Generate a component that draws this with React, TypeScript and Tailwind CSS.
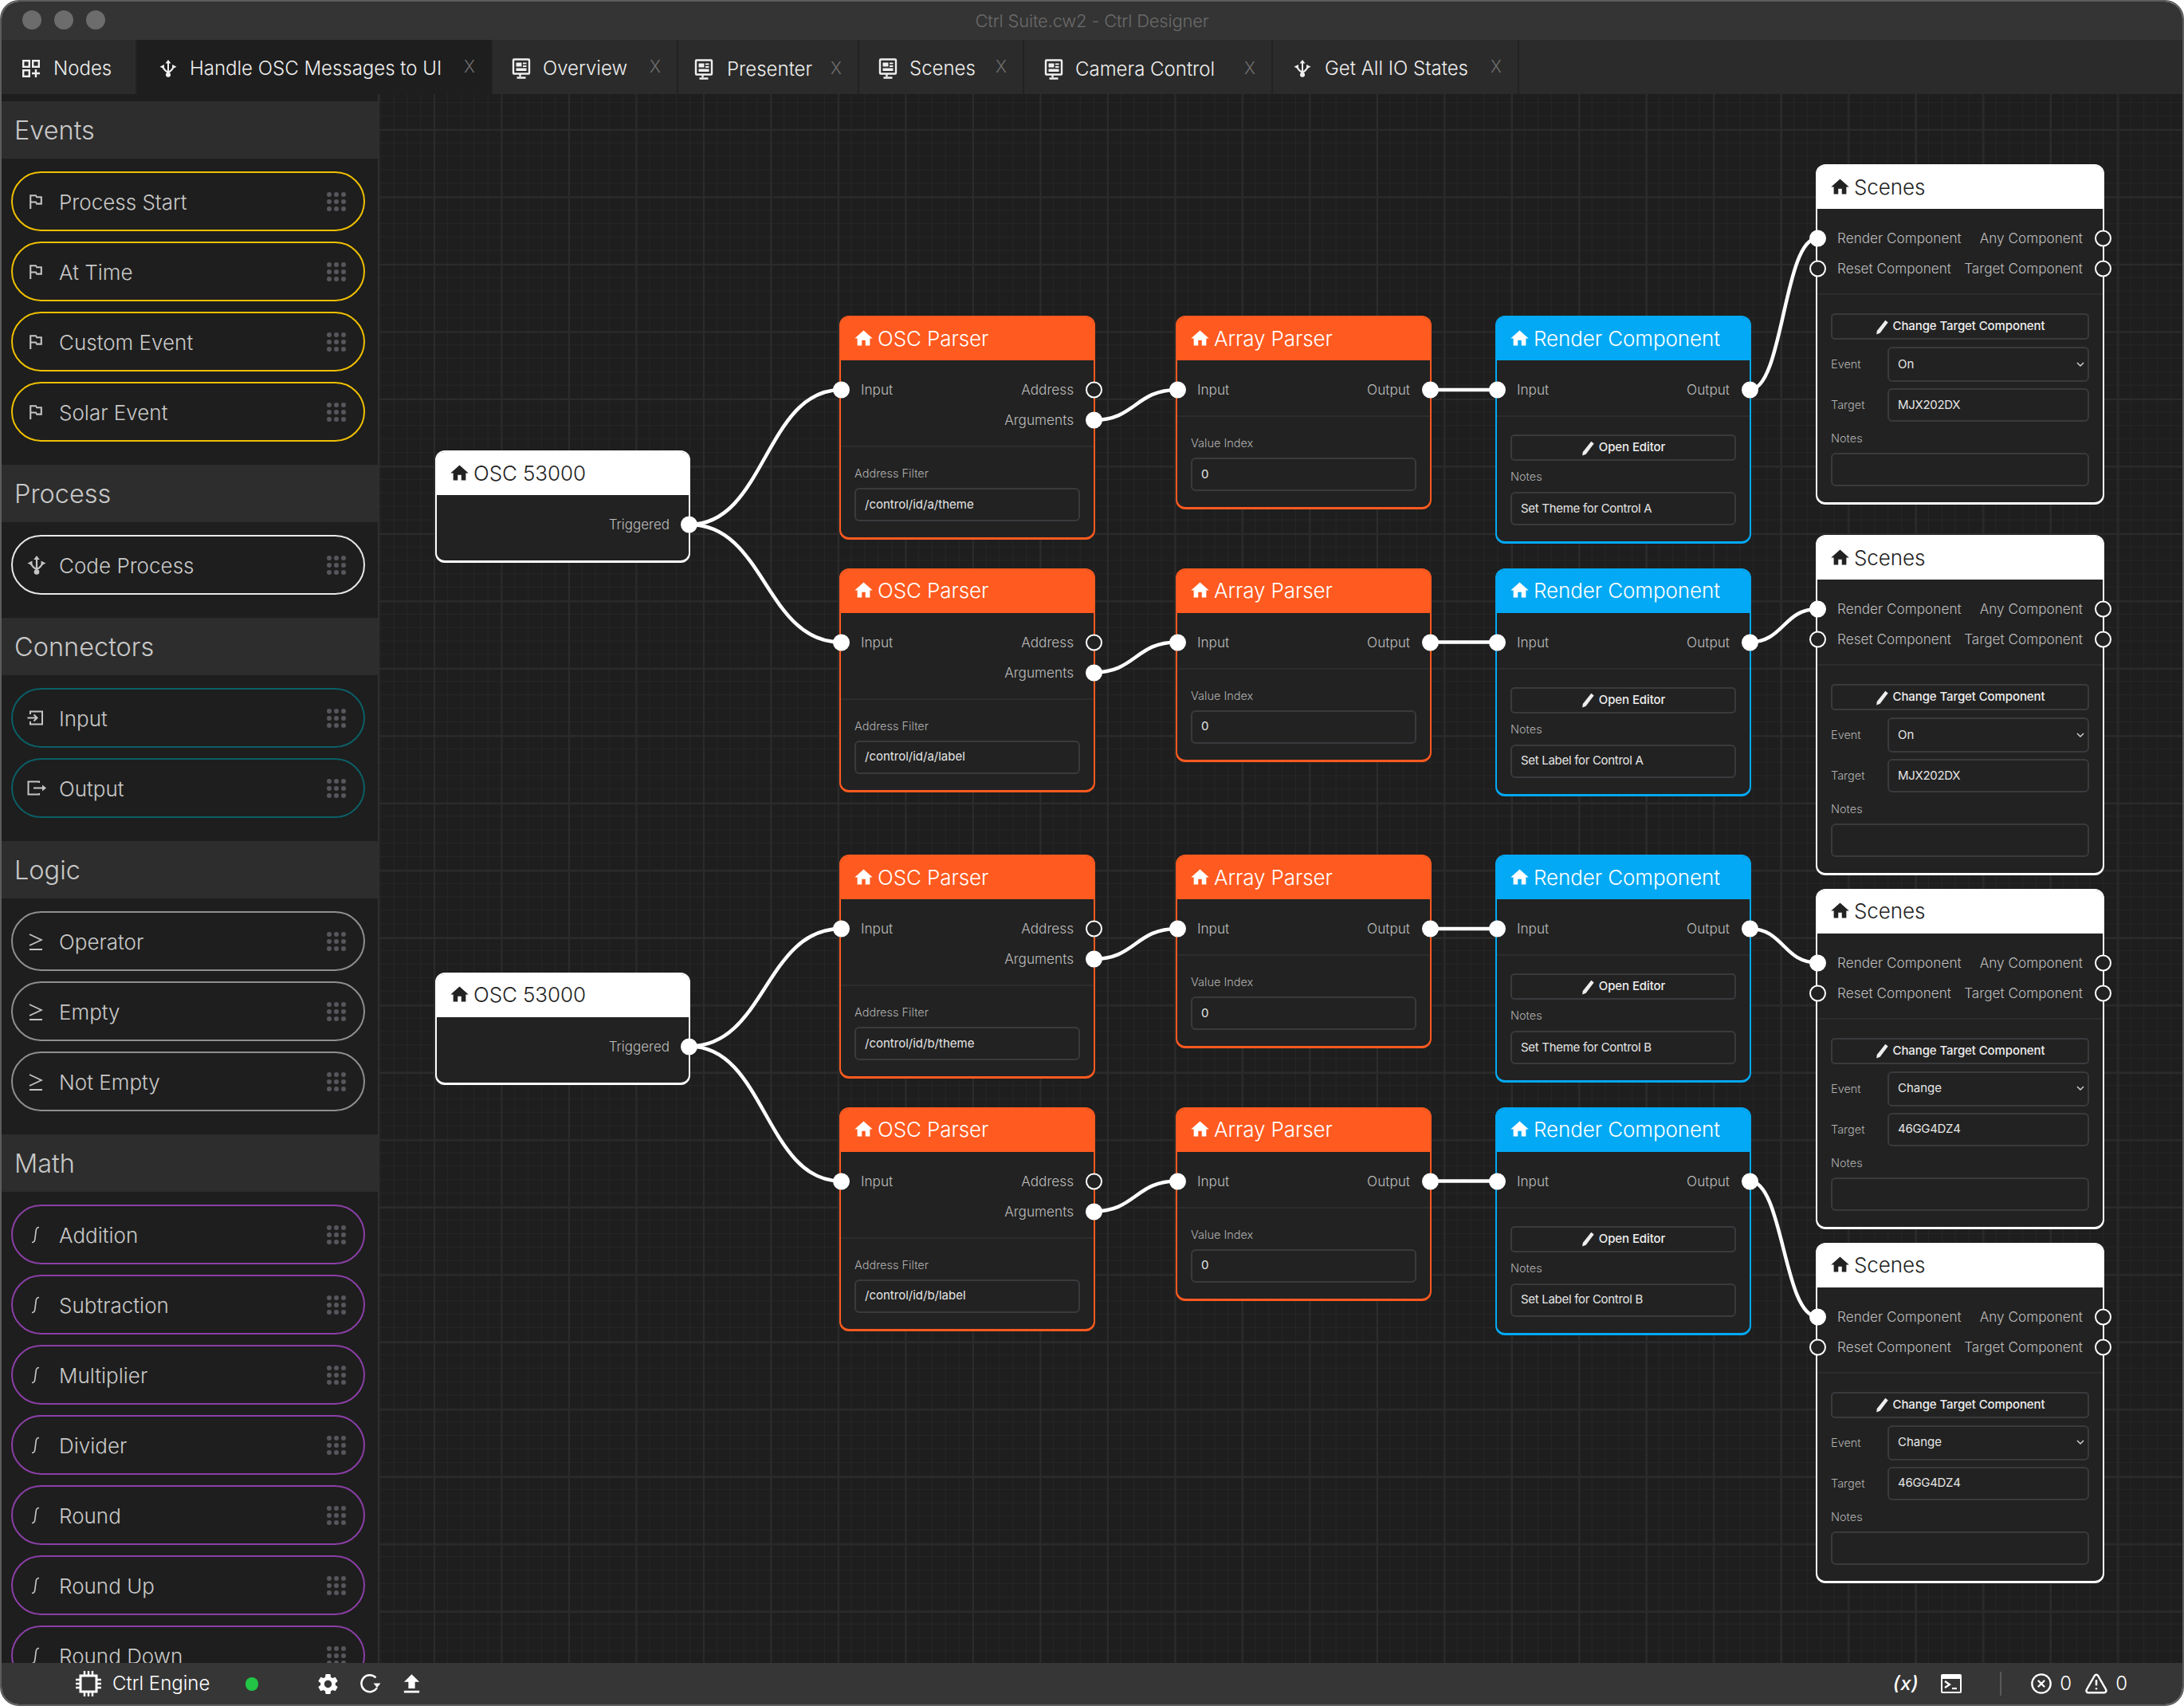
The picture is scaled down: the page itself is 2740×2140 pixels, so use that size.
import { ReactNode } from "react";
import { CircleX, TriangleAlert } from "lucide-react";
import { MdFileUpload, MdHome, MdOutlinedFlag, MdSettings } from "react-icons/md";

// canvas origin in page coordinates
const ORIGIN_X = 476;
const ORIGIN_Y = 118;

const UsbIcon = ({ size = 24 }: { size?: number }) => (
  <svg width={size} height={size} viewBox="0 0 24 24" fill="none" className="shrink-0">
    <path d="M12 3v17" stroke="currentColor" strokeWidth="2.2" />
    <path d="M12 16.5c-3 0-5-2.5-7-6M12 16.5c3 0 5-2.5 7-6" stroke="currentColor" strokeWidth="2.2" />
    <path d="M12 0l3.8 5H8.200zM0.500 9.500l6-3v6zM23.500 9.500l-6-3v6z" fill="currentColor" />
    <circle cx="12" cy="20.500" r="3.300" fill="currentColor" />
  </svg>
);

const PresenterIcon = () => (
  <svg width="24" height="26" viewBox="0 0 24 26" fill="none" className="shrink-0">
    <rect x="2" y="1.500" width="20" height="18" rx="1" stroke="currentColor" strokeWidth="2.400" />
    <path d="M5.500 5.500h7v5h-7zM14 5.500h4.500v2H14zM14 9h4.500v2H14zM5.500 12.500h13v3.500h-13z" fill="currentColor" />
    <path d="M10.500 20v3M6.500 24.500h11" stroke="currentColor" strokeWidth="2.400" />
  </svg>
);

const NodesIcon = () => (
  <svg width="22" height="22" viewBox="0 0 22 22" fill="none" className="shrink-0">
    <rect x="1.200" y="1.200" width="7.600" height="7.600" stroke="currentColor" strokeWidth="2.400" />
    <rect x="13.200" y="1.200" width="7.600" height="7.600" stroke="currentColor" strokeWidth="2.400" />
    <rect x="1.200" y="13.200" width="7.600" height="7.600" stroke="currentColor" strokeWidth="2.400" />
    <path d="M17 12v10M12 17h10" stroke="currentColor" strokeWidth="2.400" />
  </svg>
);

const InputIcon = () => (
  <svg width="22" height="22" viewBox="0 0 22 22" fill="none">
    <path d="M4 6V2.500h15v16H4V15" stroke="currentColor" strokeWidth="2" />
    <path d="M0.500 10.500H12M8.500 6.500l4 4-4 4" stroke="currentColor" strokeWidth="2" />
  </svg>
);

const OutputIcon = () => (
  <svg width="24" height="22" viewBox="0 0 24 22" fill="none">
    <path d="M15 4V2.500H1.500v16H15V17" stroke="currentColor" strokeWidth="2" />
    <path d="M8 10.500h13" stroke="currentColor" strokeWidth="2" />
    <path d="M24 10.500l-5-4v8z" fill="currentColor" />
  </svg>
);

const GteIcon = () => (
  <svg width="20" height="22" viewBox="0 0 20 22" fill="none">
    <path d="M3 2l15 7-15 7M3 21h16" stroke="currentColor" strokeWidth="1.800" />
  </svg>
);

const IntegralIcon = () => (
  <svg width="18" height="22" viewBox="0 0 18 22" fill="none">
    <path d="M15 1.500c-3 0-3.500 1.500-3.800 4l-1.400 11c-.3 2.600-1 4-3.800 4" stroke="currentColor" strokeWidth="1.700" />
  </svg>
);

const PencilIcon = () => (
  <svg width="18" height="20" viewBox="0 0 16 18" className="shrink-0" fill="currentColor">
    <path d="M11 1.500l3 2.500L5 16l-4 1.500L1.500 13.500z" />
  </svg>
);

const ChipIcon = () => (
  <svg width="32" height="32" viewBox="0 0 32 32" fill="none">
    <rect x="6" y="6" width="20" height="20" stroke="currentColor" strokeWidth="3" />
    <path d="M11 0v5M16 0v5M21 0v5M11 27v5M16 27v5M21 27v5M0 11h5M0 16h5M0 21h5M27 11h5M27 16h5M27 21h5" stroke="currentColor" strokeWidth="2.400" />
  </svg>
);

const RefreshIcon = () => (
  <svg width="28" height="28" viewBox="0 0 28 28" fill="none">
    <path d="M21.500 6.500A10.500 10.500 0 1 0 23 19" stroke="currentColor" strokeWidth="2.400" />
    <path d="M18.500 13.500h9l-4.500 5.500z" fill="currentColor" />
  </svg>
);

const TerminalIcon = () => (
  <svg width="26" height="24" viewBox="0 0 26 24">
    <rect x="0" y="0" width="26" height="24" rx="2" fill="currentColor" />
    <rect x="2" y="6" width="22" height="16" fill="#363636" />
    <path d="M5 9l6 4-6 4" fill="none" stroke="currentColor" strokeWidth="2.200" />
    <path d="M14 18h6" stroke="currentColor" strokeWidth="2.200" />
  </svg>
);

const GripDots = () => (
  <div className="ml-auto grid grid-cols-3 gap-[3px]">
    {Array.from({ length: 9 }).map((_, i) => (
      <span key={i} className="w-[6px] h-[6px] rounded-full bg-[#56565c]" />
    ))}
  </div>
);

interface Section {
  title: string;
  border: string;
  icon: ReactNode;
  items: string[];
}

const flag = <span className="-ml-[2px] flex"><MdOutlinedFlag size={25} /></span>;

const sections: Section[] = [
  { title: "Events", border: "border-[#f0c000]", icon: flag, items: ["Process Start", "At Time", "Custom Event", "Solar Event"] },
  { title: "Process", border: "border-[#e8e8e8]", icon: <UsbIcon />, items: ["Code Process"] },
  { title: "Connectors", border: "border-[#0b5f66]", icon: null, items: ["Input", "Output"] },
  { title: "Logic", border: "border-[#8f8f8f]", icon: <GteIcon />, items: ["Operator", "Empty", "Not Empty"] },
  { title: "Math", border: "border-[#8a3fa6]", icon: <IntegralIcon />, items: ["Addition", "Subtraction", "Multiplier", "Divider", "Round", "Round Up", "Round Down"] },
];

const Sidebar = () => (
  <aside className="w-[474px] shrink-0 bg-[#1e1e1e] border-r-2 border-[#2e2e2e] pt-[9px] overflow-hidden">
    {sections.map((s) => (
      <section key={s.title} className="pb-[29px]">
        <h2 className="h-[72px] flex items-center pl-[16px] pt-[2px] bg-[#2d2d2d] text-[32.500px] font-light text-[#c8c8c8]">
          {s.title}
        </h2>
        <div className="flex flex-col gap-[13px] pt-[16px] pl-[12px] pr-[16px]">
          {s.items.map((item) => (
            <div key={item} className={`h-[75px] shrink-0 flex items-center rounded-full border-2 pl-[18px] pr-[22px] ${s.border}`}>
              <span className="w-[40px] shrink-0 flex text-[#c4c4c4]">
                {s.icon ?? (item === "Input" ? <InputIcon /> : <OutputIcon />)}
              </span>
              <span className="pt-[2px] text-[26px] font-light text-[#c8c8c8]">{item}</span>
              <GripDots />
            </div>
          ))}
        </div>
      </section>
    ))}
  </aside>
);

const tabs = [
  { label: "Nodes", icon: <NodesIcon />, w: "w-[170px]", pl: "pl-[26px]", gap: "gap-[17px]", close: false, bg: "bg-[#2b2b2b] pt-[3px]" },
  { label: "Handle OSC Messages to UI", icon: <UsbIcon size={22} />, w: "w-[446px]", pl: "pl-[28px]", gap: "gap-[16px]", close: true, bg: "bg-[#1e1e1e] pt-[3px]" },
  { label: "Overview", icon: <PresenterIcon />, w: "w-[233px]", pl: "pl-[24px]", gap: "gap-[15px]", close: true, bg: "bg-[#2b2b2b] pt-[3px]" },
  { label: "Presenter", icon: <PresenterIcon />, w: "w-[227px]", pl: "pl-[20px]", gap: "gap-[17px]", close: true, bg: "bg-[#2b2b2b] pt-[6px]" },
  { label: "Scenes", icon: <PresenterIcon />, w: "w-[207px]", pl: "pl-[24px]", gap: "gap-[15px]", close: true, bg: "bg-[#2b2b2b] pt-[3px]" },
  { label: "Camera Control", icon: <PresenterIcon />, w: "w-[312px]", pl: "pl-[25px]", gap: "gap-[15px]", close: true, bg: "bg-[#2b2b2b] pt-[6px]" },
  { label: "Get All IO States", icon: <UsbIcon size={22} />, w: "w-[309px]", pl: "pl-[26px]", gap: "gap-[17px]", close: true, bg: "bg-[#2b2b2b] pt-[3px]" },
];

const TabBar = () => (
  <div className="h-[68px] flex shrink-0 bg-[#2b2b2b]">
    {tabs.map((t) => (
      <div key={t.label} className={`${t.w} ${t.pl} ${t.gap} ${t.bg} h-full shrink-0 flex items-center pr-[20px] border-r-2 border-[#222] text-[#efefef] text-[24px] font-light`}>
        {t.icon}
        <span className="whitespace-nowrap">{t.label}</span>
        {t.close && <span className="ml-auto -mt-[3px] text-[21px] font-light text-[#6f6f6f]">X</span>}
      </div>
    ))}
  </div>
);

const Port = ({ side, filled }: { side: "left" | "right"; filled: boolean }) => (
  <span
    className={`absolute top-1/2 -translate-y-1/2 w-[21px] h-[21px] rounded-full border-2 border-white ${
      side === "left" ? "left-[-10.5px]" : "right-[-10.5px]"
    } ${filled ? "bg-white" : "bg-[#222]"}`}
  />
);

type PortDef = { label: string; filled: boolean };
type Row = { l?: PortDef; r?: PortDef };

const Ports = ({ rows, pb }: { rows: Row[]; pb: string }) => (
  <div className={`pt-[18px] ${pb} border-b-2 border-[#2c2c2c]`}>
    {rows.map((row, i) => (
      <div key={i} className="relative flex items-center justify-between px-[25px] h-[38px] text-[17.200px] font-light text-[#bdbdbd]">
        {row.l ? <span>{row.l.label}</span> : <span />}
        {row.r ? <span>{row.r.label}</span> : <span />}
        {row.l && <Port side="left" filled={row.l.filled} />}
        {row.r && <Port side="right" filled={row.r.filled} />}
      </div>
    ))}
  </div>
);

const Field = ({ value, className = "" }: { value: string; className?: string }) => (
  <div className={`h-[42px] flex items-center px-[11px] rounded-[6px] border-2 border-[#3a3a3e] text-[15px] text-[#e6e6e6] ${className}`}>
    {value}
  </div>
);

const Label = ({ children, className = "" }: { children: ReactNode; className?: string }) => (
  <div className={`text-[14.500px] font-light leading-[20px] text-[#b0b0b0] ${className}`}>{children}</div>
);

const EditButton = ({ label }: { label: string }) => (
  <div className="h-[33px] flex items-center justify-center gap-[4px] rounded-[5px] border-2 border-[#3a3a3e] text-[15px] font-medium text-[#eeeeee] tracking-[-0.1px]">
    <PencilIcon />
    {label}
  </div>
);

const themes = {
  white: { box: "border-white", head: "bg-white text-[#222]" },
  orange: { box: "border-[#ff5a1f]", head: "bg-[#ff5a1f] text-white" },
  blue: { box: "border-[#03a9f4]", head: "bg-[#03a9f4] text-white" },
};

const Node = ({ x, y, w, h, title, theme, children }: { x: number; y: number; w: number; h: number; title: string; theme: keyof typeof themes; children: ReactNode }) => (
  <div
    className={`absolute rounded-[12px] border-2 border-b-[3px] bg-[#222] ${themes[theme].box}`}
    style={{ left: x - ORIGIN_X, top: y - ORIGIN_Y, width: w, height: h }}
  >
    <div className={`h-[54px] rounded-t-[9px] flex items-center gap-[4px] pl-[15px] pb-[2px] text-[26px] font-light tracking-[-0.1px] ${themes[theme].head}`}>
      <MdHome size={27} />
      {title}
    </div>
    {children}
  </div>
);

const OscNode = ({ y }: { y: number }) => (
  <Node x={546} y={y} w={320} h={141} title="OSC 53000" theme="white">
    <div className="relative h-[38px] mt-[18px] flex items-center justify-end pr-[24px] text-[17px] font-light text-[#bdbdbd]">
      <span className="pt-[2px]">Triggered</span>
      <Port side="right" filled />
    </div>
  </Node>
);

const ParserNode = ({ y, path }: { y: number; path: string }) => (
  <Node x={1053} y={y} w={321} h={281} title="OSC Parser" theme="orange">
    <Ports
      pb="pb-[13px]"
      rows={[
        { l: { label: "Input", filled: true }, r: { label: "Address", filled: false } },
        { r: { label: "Arguments", filled: true } },
      ]}
    />
    <div className="px-[17px] pt-[23px]">
      <Label className="mb-[8px]">Address Filter</Label>
      <Field value={path} />
    </div>
  </Node>
);

const ArrayNode = ({ y }: { y: number }) => (
  <Node x={1475} y={y} w={321} h={243} title="Array Parser" theme="orange">
    <Ports pb="pb-[13px]" rows={[{ l: { label: "Input", filled: true }, r: { label: "Output", filled: true } }]} />
    <div className="px-[17px] pt-[23px]">
      <Label className="mb-[8px]">Value Index</Label>
      <Field value="0" />
    </div>
  </Node>
);

const RenderNode = ({ y, note }: { y: number; note: string }) => (
  <Node x={1876} y={y} w={321} h={286} title="Render Component" theme="blue">
    <Ports pb="pb-[13px]" rows={[{ l: { label: "Input", filled: true }, r: { label: "Output", filled: true } }]} />
    <div className="px-[17px] pt-[22px]">
      <EditButton label="Open Editor" />
      <Label className="mt-[10px] mb-[9px]">Notes</Label>
      <Field value={note} className="tracking-[-0.3px]" />
    </div>
  </Node>
);

const ScenesNode = ({ y, event, target }: { y: number; event: string; target: string }) => (
  <Node x={2278} y={y} w={362} h={427} title="Scenes" theme="white">
    <Ports
      pb="pb-[12px]"
      rows={[
        { l: { label: "Render Component", filled: true }, r: { label: "Any Component", filled: false } },
        { l: { label: "Reset Component", filled: false }, r: { label: "Target Component", filled: false } },
      ]}
    />
    <div className="px-[17px] pt-[23px]">
      <EditButton label="Change Target Component" />
      <div className="flex items-center mt-[9px] h-[44px]">
        <Label className="w-[71px] shrink-0">Event</Label>
        <div className="flex-1 h-[44px] flex items-center justify-between pl-[11px] pr-[4px] rounded-[6px] border-2 border-[#3a3a3e] text-[15px] text-[#e6e6e6]">
          {event}
          <svg width="10" height="7" viewBox="0 0 10 7" fill="none"><path d="M1 1l4 4 4-4" stroke="#d0d0d0" strokeWidth="1.500" /></svg>
        </div>
      </div>
      <div className="flex items-center mt-[8px]">
        <Label className="w-[71px] shrink-0">Target</Label>
        <Field value={target} className="flex-1 tracking-[-0.3px]" />
      </div>
      <Label className="mt-[11px] mb-[8px]">Notes</Label>
      <Field value="" />
    </div>
  </Node>
);

const rows = [
  { y: 396, path: "/control/id/a/theme", note: "Set Theme for Control A" },
  { y: 712.5, path: "/control/id/a/label", note: "Set Label for Control A" },
  { y: 1072, path: "/control/id/b/theme", note: "Set Theme for Control B" },
  { y: 1388.5, path: "/control/id/b/label", note: "Set Label for Control B" },
];

const scenes = [
  { y: 206, event: "On", target: "MJX202DX" },
  { y: 671, event: "On", target: "MJX202DX" },
  { y: 1114.5, event: "Change", target: "46GG4DZ4" },
  { y: 1558.5, event: "Change", target: "46GG4DZ4" },
];

const wire = (x1: number, y1: number, x2: number, y2: number) => {
  const mid = (x1 + x2) / 2;
  return `M${x1} ${y1}C${mid} ${y1} ${mid} ${y2} ${x2} ${y2}`;
};

const wires = [
  wire(865, 658, 1055, rows[0].y + 93),
  wire(865, 658, 1055, rows[1].y + 93),
  wire(865, 1312.5, 1055, rows[2].y + 93),
  wire(865, 1312.5, 1055, rows[3].y + 93),
  ...rows.flatMap((r, i) => [
    wire(1372, r.y + 131, 1477, r.y + 93),
    wire(1794, r.y + 93, 1878, r.y + 93),
    wire(2195, r.y + 93, 2280, scenes[i].y + 93),
  ]),
];

const Canvas = () => (
  <main className="relative flex-1 overflow-hidden bg-[#1e1e1e] [background-image:linear-gradient(#2b2b2b_2px,transparent_2px),linear-gradient(90deg,#2b2b2b_2px,transparent_2px),linear-gradient(#262626_1px,transparent_1px),linear-gradient(90deg,#262626_1px,transparent_1px)] [background-size:84.5px_84.5px,84.5px_84.5px,16.9px_16.9px,16.9px_16.9px] [background-position:68px_44px,68px_44px,68px_10px,68px_10px]">
    <OscNode y={565} />
    <OscNode y={1219.5} />
    {rows.map((r) => (
      <div key={r.y}>
        <ParserNode y={r.y} path={r.path} />
        <ArrayNode y={r.y} />
        <RenderNode y={r.y} note={r.note} />
      </div>
    ))}
    {scenes.map((s) => (
      <ScenesNode key={s.y} y={s.y} event={s.event} target={s.target} />
    ))}
    <svg className="absolute left-0 top-0 pointer-events-none" width="2262" height="1968" viewBox={`${ORIGIN_X} ${ORIGIN_Y} 2262 1968`} fill="none">
      {wires.map((d, i) => (
        <path key={i} d={d} stroke="#fff" strokeWidth="4.500" />
      ))}
    </svg>
  </main>
);

const Footer = () => (
  <footer className="h-[52px] shrink-0 flex items-center bg-[#363636] text-white pl-[93px] pr-[69px]">
    <ChipIcon />
    <span className="ml-[14px] text-[24px] font-light">Ctrl Engine</span>
    <span className="ml-[45px] w-[16px] h-[17px] rounded-full bg-[#22c545]" />
    <span className="ml-[72px] flex"><MdSettings size={31} /></span>
    <span className="ml-[23px] flex"><RefreshIcon /></span>
    <span className="ml-[22px] flex"><MdFileUpload size={33} /></span>
    <span className="ml-auto text-[24px] italic font-medium tracking-[0.5px]">(x)</span>
    <span className="ml-[28px] flex"><TerminalIcon /></span>
    <span className="ml-[48px] w-[2px] h-[30px] bg-[#5a5a5a]" />
    <span className="ml-[36px] flex"><CircleX size={28} strokeWidth={2} /></span>
    <span className="ml-[9px] text-[24px] font-light">0</span>
    <span className="ml-[16px] flex"><TriangleAlert size={30} strokeWidth={2} /></span>
    <span className="ml-[9px] text-[24px] font-light">0</span>
  </footer>
);

export default function App() {
  return (
    <div className="w-[2740px] h-[2140px] bg-white font-[Inter,sans-serif]">
      <div className="w-full h-full flex flex-col rounded-[24px] overflow-hidden border-2 border-[#5c5c5c]">
        <header className="relative h-[48px] shrink-0 flex items-center justify-center bg-[#343434]">
          <div className="absolute left-[26px] top-[11px] flex gap-[16px]">
            <span className="w-[24px] h-[24px] rounded-full bg-[#6c6c6c]" />
            <span className="w-[24px] h-[24px] rounded-full bg-[#6c6c6c]" />
            <span className="w-[24px] h-[24px] rounded-full bg-[#6c6c6c]" />
          </div>
          <span className="text-[22px] font-light text-[#6a6a6a] tracking-[-0.2px]">Ctrl Suite.cw2 - Ctrl Designer</span>
        </header>
        <TabBar />
        <div className="flex-1 flex min-h-0">
          <Sidebar />
          <Canvas />
        </div>
        <Footer />
      </div>
    </div>
  );
}
